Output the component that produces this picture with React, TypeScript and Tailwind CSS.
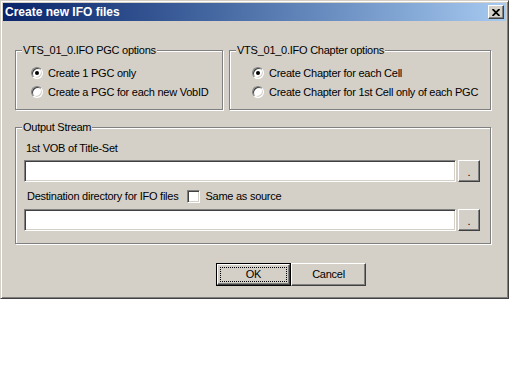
import React from 'react';

const sunken =
  'border border-t-[#808080] border-l-[#808080] border-b-white border-r-white shadow-[inset_1px_1px_0_#404040,inset_-1px_-1px_0_#d4d0c8]';
const raised =
  'border border-t-white border-l-white border-b-[#404040] border-r-[#404040] shadow-[inset_-1px_-1px_0_#808080]';

function Radio({ checked }: { checked?: boolean }) {
  return (
    <span className={`flex h-[12px] w-[12px] shrink-0 items-center justify-center rounded-full bg-white ${sunken}`}>
      {checked && <span className="h-[4px] w-[4px] rounded-full bg-black" />}
    </span>
  );
}

function Group({ label, className, children }: { label: string; className: string; children: React.ReactNode }) {
  return (
    <div className={`relative border border-[#808080] shadow-[inset_1px_1px_0_#fff,1px_1px_0_#fff] ${className}`}>
      <span className="absolute left-[6px] top-[-7px] bg-[#d4d0c8] px-[1px] leading-[13px]">{label}</span>
      {children}
    </div>
  );
}

function Option({ checked, label }: { checked?: boolean; label: string }) {
  return (
    <div className="flex h-[16px] items-center gap-[5px]">
      <Radio checked={checked} />
      <span>{label}</span>
    </div>
  );
}

export default function App() {
  return (
    <div className="h-[384px] w-[512px] bg-white font-['Liberation_Sans',Arial,sans-serif] text-[11px] leading-[13px] tracking-[-0.25px] text-black">
      <div className="flex h-[299px] w-[509px] flex-col border border-t-[#d4d0c8] border-l-[#d4d0c8] border-b-[#404040] border-r-[#404040] bg-[#d4d0c8] p-[2px] shadow-[inset_1px_1px_0_#fff,inset_-1px_-1px_0_#808080]">
        {/* title bar */}
        <div className="flex h-[18px] shrink-0 items-center justify-between bg-gradient-to-r from-[#0a246a] to-[#a6caf0] pl-[2px] pr-[2px]">
          <span className="text-[12px] font-bold tracking-normal text-white">Create new IFO files</span>
          <div className={`flex h-[14px] w-[16px] items-center justify-center bg-[#d4d0c8] ${raised}`}>
            <svg width="8" height="7" viewBox="0 0 8 7">
              <path d="M0.5 0 L7.5 7 M7.5 0 L0.5 7" stroke="#000" strokeWidth="1.8" fill="none" />
            </svg>
          </div>
        </div>

        <div className="flex flex-col pl-[12px]">
          <div className="mt-[29px] flex gap-[6px]">
            <Group label="VTS_01_0.IFO PGC options" className="h-[60px] w-[208px]">
              <div className="flex flex-col gap-[3px] pl-[15px] pt-[14px]">
                <Option checked label="Create 1 PGC only" />
                <Option label="Create a PGC for each new VobID" />
              </div>
            </Group>
            <Group label="VTS_01_0.IFO Chapter options" className="h-[60px] w-[262px]">
              <div className="flex flex-col gap-[3px] pl-[22px] pt-[14px]">
                <Option checked label="Create Chapter for each Cell" />
                <Option label="Create Chapter for 1st Cell only of each PGC" />
              </div>
            </Group>
          </div>

          <Group label="Output Stream" className="mt-[17px] h-[117px] w-[476px]">
            <div className="flex flex-col pl-[8px] pt-[14px]">
              <div className="h-[13px] pl-[2px]">1st VOB of Title-Set</div>
              <div className="mt-[5px] flex">
                <div className={`h-[22px] w-[432px] bg-white ${sunken}`} />
                <div className={`ml-[2px] flex h-[22px] w-[22px] items-center justify-center bg-[#d4d0c8] ${raised}`}>
                  <span className="mt-[2px]">.</span>
                </div>
              </div>
              <div className="mt-[8px] flex h-[13px] items-center pl-[3px]">
                <span>Destination directory for IFO files</span>
                <span className={`ml-[9px] h-[13px] w-[13px] bg-white ${sunken}`} />
                <span className="ml-[5px]">Same as source</span>
              </div>
              <div className="mt-[6px] flex">
                <div className={`h-[22px] w-[432px] bg-white ${sunken}`} />
                <div className={`ml-[2px] flex h-[22px] w-[22px] items-center justify-center bg-[#d4d0c8] ${raised}`}>
                  <span className="mt-[2px]">.</span>
                </div>
              </div>
            </div>
          </Group>

          <div className="ml-[201px] mt-[19px] flex">
            <div className="h-[23px] w-[75px] border border-black">
              <div className={`h-full w-full p-[2px] ${raised}`}>
                <div className="flex h-full w-full items-center justify-center border border-dotted border-black">OK</div>
              </div>
            </div>
            <div className={`flex h-[23px] w-[75px] items-center justify-center ${raised}`}>Cancel</div>
          </div>
        </div>
      </div>
    </div>
  );
}
